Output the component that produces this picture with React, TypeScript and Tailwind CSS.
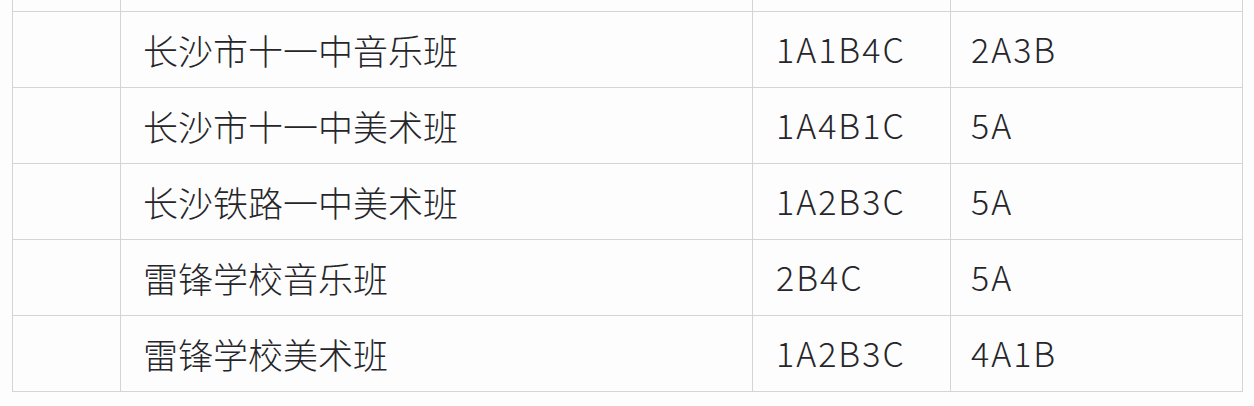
import React from 'react'

// 成绩要求表（截图裁切：上方只露出上一行的底部）
const rows = [
  { school: '长沙市十一中音乐班', a: '1A1B4C', b: '2A3B' },
  { school: '长沙市十一中美术班', a: '1A4B1C', b: '5A' },
  { school: '长沙铁路一中美术班', a: '1A2B3C', b: '5A' },
  { school: '雷锋学校音乐班', a: '2B4C', b: '5A' },
  { school: '雷锋学校美术班', a: '1A2B3C', b: '4A1B' },
]

const cell = 'border border-[#d4d4d8] p-0 align-middle'

export default function App() {
  return (
    <div
      className="w-[1254px] h-[406px] bg-[#fdfdfe] pl-[12px] text-[#26262a] font-light"
      style={{ fontFamily: '"Noto Sans CJK SC", "Noto Sans", sans-serif' }}
    >
      <table className="border-collapse table-fixed w-[1230px] -mt-px">
        <colgroup>
          <col className="w-[108px]" />
          <col className="w-[632px]" />
          <col className="w-[198px]" />
          <col className="w-[292px]" />
        </colgroup>
        <tbody>
          {/* 上一行的残余部分 */}
          <tr className="h-[12px]">
            <td className={`${cell} border-t-0`}></td>
            <td className={`${cell} border-t-0`}></td>
            <td className={`${cell} border-t-0`}></td>
            <td className={`${cell} border-t-0`}></td>
          </tr>
          {rows.map((r) => (
            <tr key={r.school} className="h-[76px]">
              <td className={cell}></td>
              <td className={`${cell} pl-[22px] text-[35px] leading-none`}>{r.school}</td>
              <td className={`${cell} pl-[23px] text-[34px] leading-none tracking-[2px]`}>{r.a}</td>
              <td className={`${cell} pl-[20px] text-[34px] leading-none tracking-[2px]`}>{r.b}</td>
            </tr>
          ))}
        </tbody>
      </table>
    </div>
  )
}
